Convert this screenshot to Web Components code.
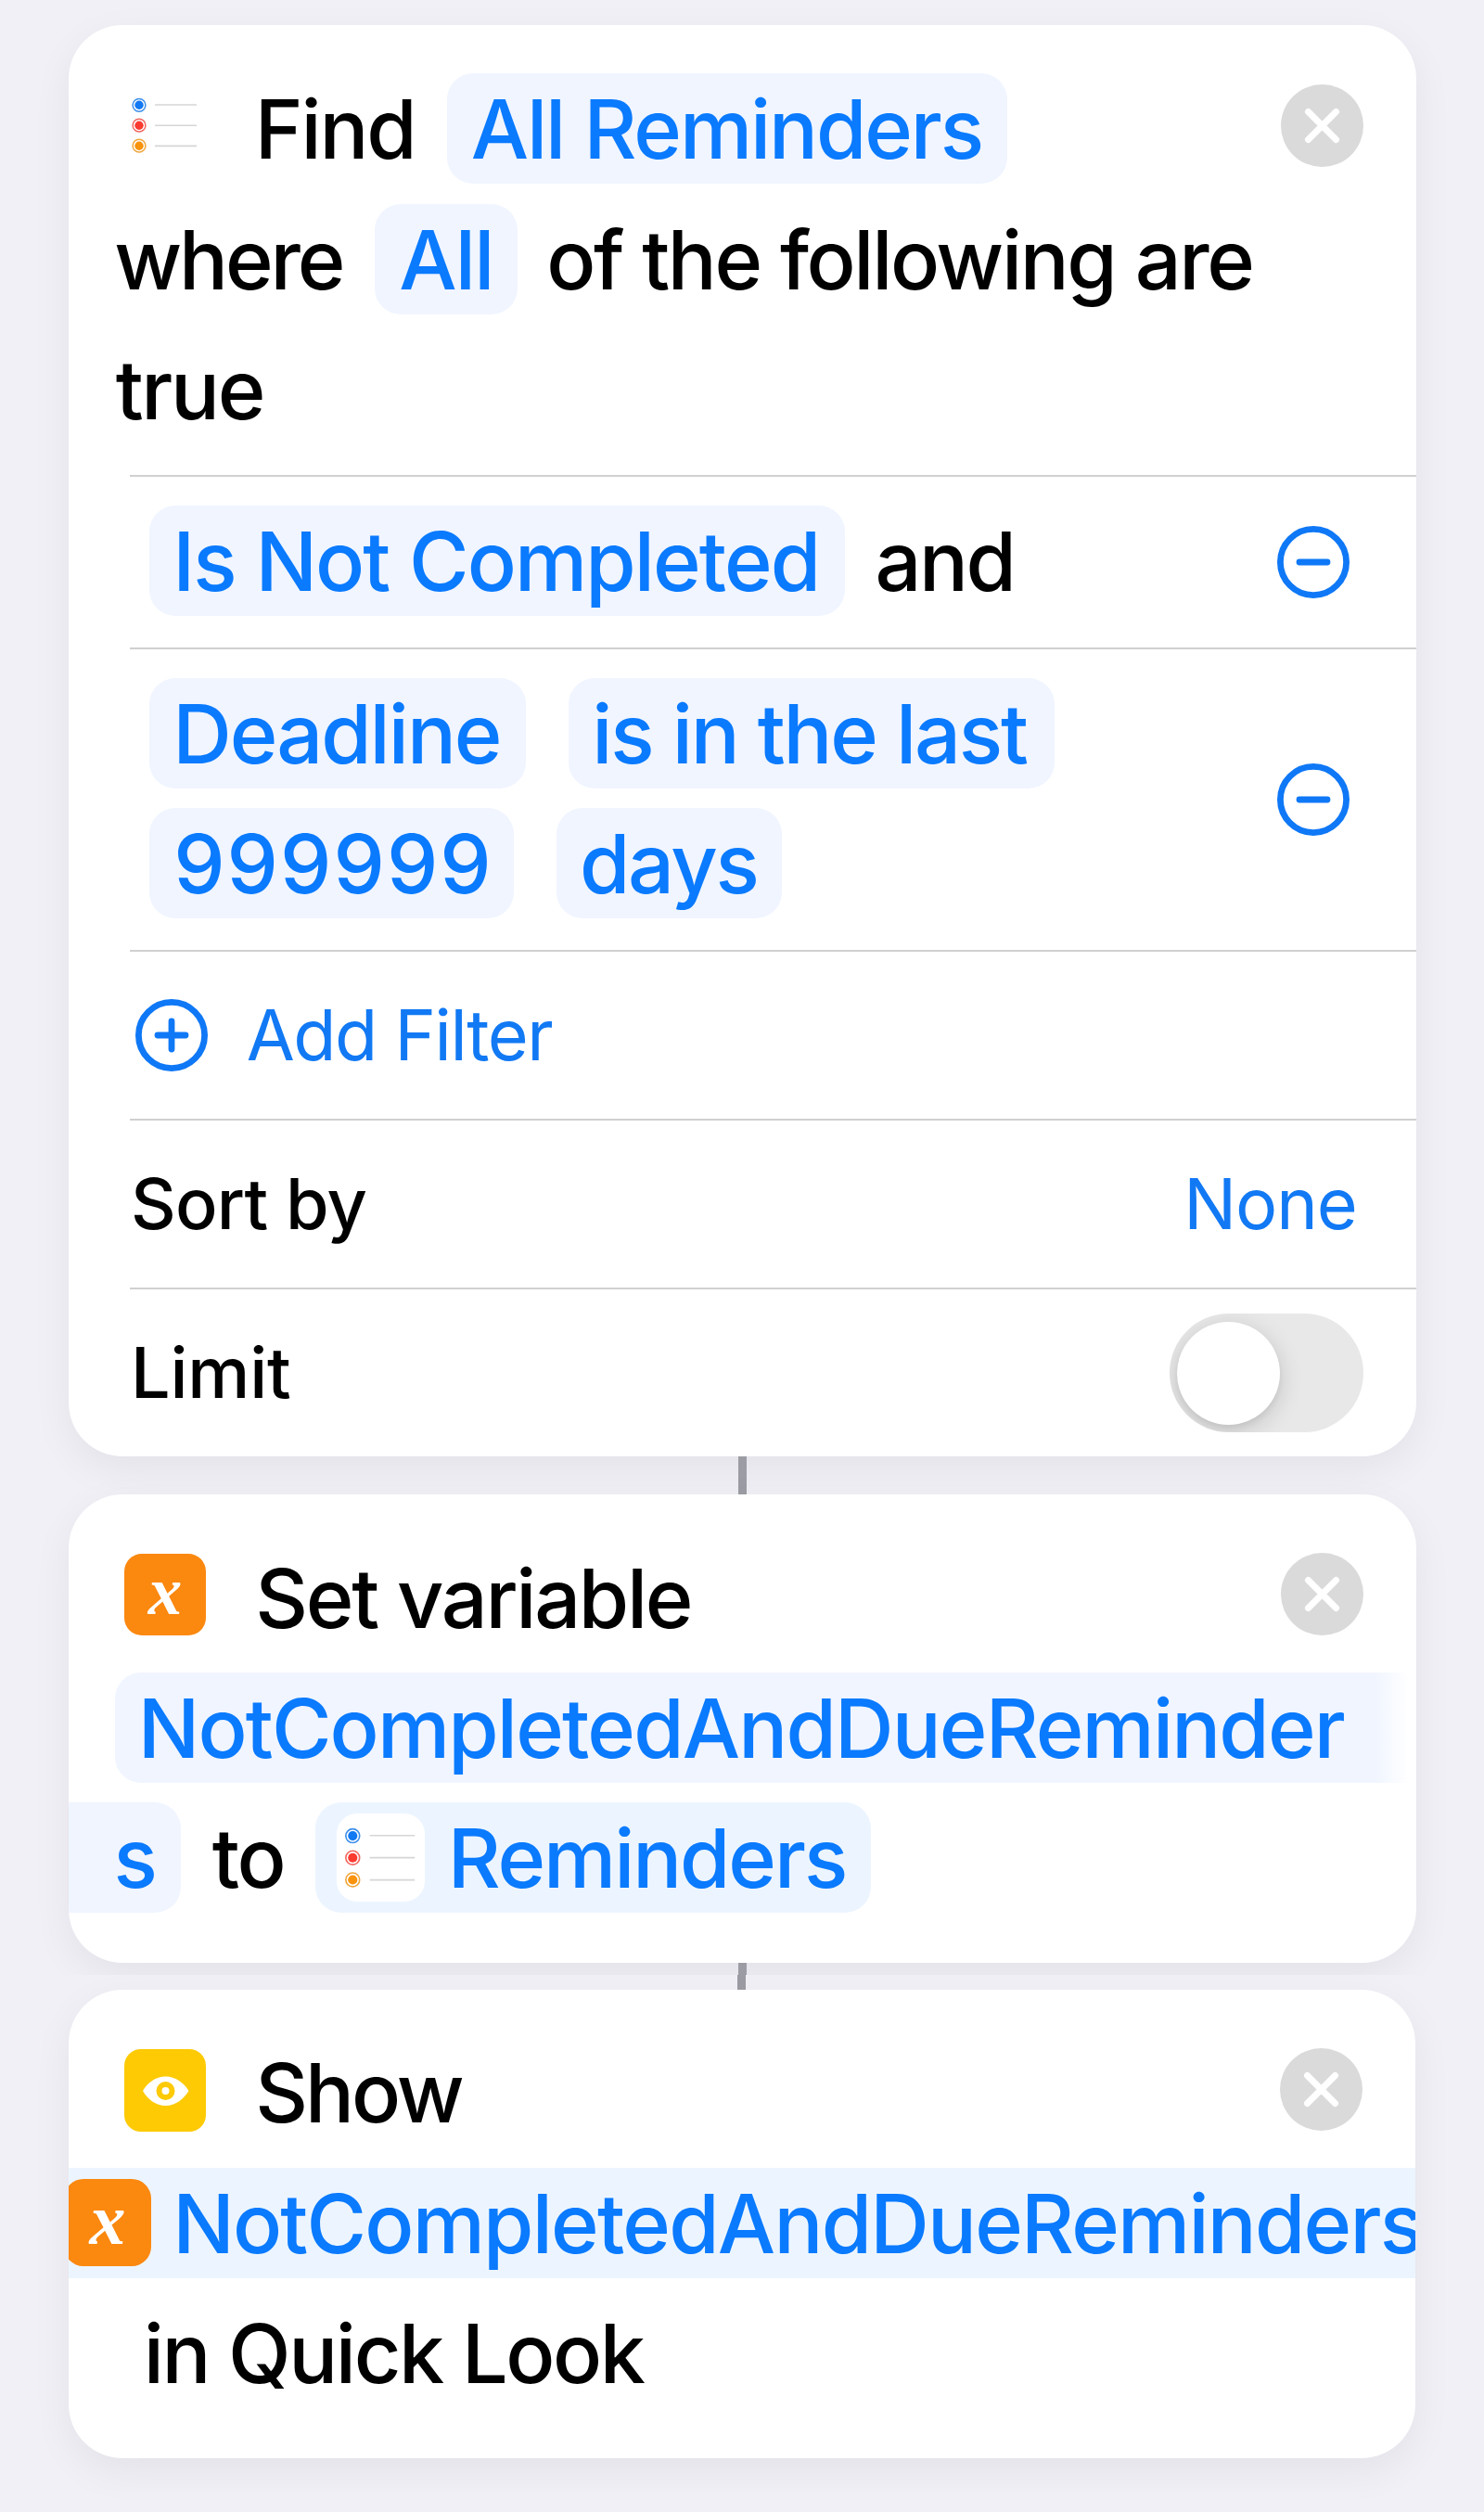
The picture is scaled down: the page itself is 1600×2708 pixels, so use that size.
<!DOCTYPE html>
<html lang="en">
<head>
<meta charset="utf-8">
<title>Shortcut editor</title>
<style>
html,body{margin:0;background:#f1f0f6;}
body{font-family:Inter,"Liberation Sans",sans-serif;width:1600px;height:2708px;overflow:hidden;color:#000}
</style>
</head>
<body>
<shortcut-editor></shortcut-editor>
<script>
const define=(name,html,init)=>{
  const t=document.createElement('template');t.innerHTML=html;
  customElements.define(name,class extends HTMLElement{
    connectedCallback(){
      if(this.shadowRoot)return;
      this.attachShadow({mode:'open'}).append(t.content.cloneNode(true));
      if(init)init.call(this,this.shadowRoot);
    }
  });
};
const ctx=document.createElement('canvas').getContext('2d');

/* A single line of text whose glyphs span exactly w pixels */
define('fit-text',`<style>
:host{display:block;flex:none;white-space:pre;font-size:88px;font-weight:530;line-height:120px;height:119px;font-kerning:normal}
:host([small]){font-size:75.5px;line-height:92px;height:92px;font-weight:500}
:host([regular]){font-weight:410}
</style><span></span>`,function(root){
  const text=this.getAttribute('text'),w=+this.getAttribute('w');
  const cs=getComputedStyle(this);
  ctx.font=cs.fontWeight+' '+cs.fontSize+' '+cs.fontFamily;
  const m=ctx.measureText(text);
  const ink=m.actualBoundingBoxRight+m.actualBoundingBoxLeft;
  const span=root.querySelector('span');
  span.textContent=text;
  this.style.width=w+'px';
  this.style.textIndent=(m.actualBoundingBoxLeft+.2)+'px';
  if(text.length>1)span.style.letterSpacing=((w+.6-ink)/(text.length-1)).toFixed(3)+'px';
});

define('token-pill',`<style>
:host{display:flex;flex:none;height:119px;border-radius:28px;background:#f0f5ff;color:#0a7aff}
:host([linked]){background:#ecf5ff}
</style><slot></slot>`);

define('close-button',`<style>:host{display:block;flex:none;width:89px;height:89px;margin-left:auto}svg{display:block}</style>
<svg width="89" height="89" viewBox="0 0 89 89"><circle cx="44.5" cy="44.5" r="44.5" fill="#dadada"/><path d="M29.5 29.5 59.5 59.5M59.5 29.5 29.5 59.5" stroke="#fff" stroke-width="7" stroke-linecap="round"/></svg>`);

define('round-button',`<style>:host{display:block;flex:none;width:78px;height:78px}svg{display:block}:host(:not([plus])) .v{display:none}</style>
<svg width="78" height="78" viewBox="0 0 78 78" fill="none" stroke="#0f78f6" stroke-width="6.8" stroke-linecap="round"><circle cx="39" cy="39" r="35.6"/><path d="M24 39H54"/><path class="v" d="M39 24V54"/></svg>`);

define('toggle-switch',`<style>
:host{display:flex;align-items:center;flex:none;box-sizing:border-box;width:209px;height:128px;border-radius:64px;background:#e8e8e8;padding-left:8px;overflow:hidden}
i{width:111px;height:111px;border-radius:50%;background:#fff;box-shadow:0 6px 26px rgba(0,0,0,.16),0 4px 6px rgba(0,0,0,.05)}
</style><i></i>`);

define('reminders-icon',`<style>:host{display:block;flex:none;width:88px;height:88px}svg{display:block;width:100%;height:100%}:host([tile]){width:95px;height:95px;background:#fff;border-radius:22px}</style>
<svg viewBox="0 0 88 88" fill="none">
<g stroke-width="1.5"><circle cx="16" cy="22.3" r="6.9" stroke="#3d8fea"/><circle cx="16" cy="44.2" r="6.9" stroke="#f2665f"/><circle cx="16" cy="66.2" r="6.9" stroke="#f0a63c"/></g>
<circle cx="16" cy="22.3" r="4.7" fill="#1279f2"/><circle cx="16" cy="44.2" r="4.7" fill="#fb3b30"/><circle cx="16" cy="66.2" r="4.7" fill="#f9930c"/>
<path d="M33 22H78M33 44.2H78M33 66.4H78" stroke="#d6d6d6" stroke-width="1.6"/></svg>`);

define('variable-icon',`<style>:host{display:flex;align-items:center;justify-content:center;flex:none;width:88px;height:88px;border-radius:19px;background:#fb880f;color:#fff;font:italic bold 73px/88px "Liberation Serif",serif}
span{display:block;height:88px;line-height:81px}
:host([large]){width:94px;height:94px;border-radius:21px;font-size:78px}</style><span>x</span>`);

define('eye-icon',`<style>:host{display:block;flex:none;width:88px;height:89px;border-radius:18px;background:#fdca04}svg{display:block}</style>
<svg width="88" height="89" viewBox="0 0 88 89"><path d="M20 45C25 36 34 29.500 44.500 29.500S64 36 69.500 45C64 54 55 61 44.500 61S25 54 20 45Z" fill="#fff"/><circle cx="44.500" cy="45" r="7" fill="none" stroke="#fdca04" stroke-width="6"/></svg>`);

define('action-card',`<style>:host{display:block;box-sizing:border-box;width:1453px;background:#fff;border-radius:58px;box-shadow:0 14px 44px rgba(20,10,40,.06)}
div{border-radius:inherit;overflow:hidden;height:100%}</style><div><slot></slot></div>`);

define('token-row',`<style>:host{display:flex;align-items:flex-start;height:119px;margin-bottom:21.500px}</style><slot></slot>`);

define('list-row',`<style>:host{display:flex;box-sizing:border-box;align-items:center;margin-left:66px;border-top:2px solid #d0d0d2;height:182px}
</style><slot></slot>`);

define('flow-link',`<style>:host{display:block;width:9px;background:#9c9ca4;margin-left:722px}</style>`);

define('shortcut-editor',`<style>
:host{display:block}
main{padding:27px 0 0 74px;box-sizing:border-box;overflow:hidden;height:2129px}
.tail{background:#f1f0f6;height:579px;padding-left:74px;overflow:hidden}
.head{height:485px;box-sizing:border-box;padding-top:52px}
.stack{display:flex;flex-direction:column}
.stack token-row:last-child{margin-bottom:0}
.fade{background:linear-gradient(90deg,#f0f5ff 0,#f0f5ff 1357.500px,#fff 1395px);border-radius:28px 0 0 28px;width:1404px}
</style>
<main>
<action-card style="height:1543px">
  <div class="head">
    <token-row><reminders-icon style="margin:12px 0 0 60px"></reminders-icon><fit-text text="Find" w="162" style="margin-left:59.500px"></fit-text><token-pill style="margin-left:38px;padding:0 28.500px 0 28px"><fit-text text="All Reminders" w="547.500"></fit-text></token-pill><close-button style="margin:11.500px 57px 0 auto"></close-button></token-row>
    <token-row><fit-text text="where" w="243" style="margin-left:51px"></fit-text><token-pill style="margin-left:36px;padding:0 31px 0 28px"><fit-text text="All" w="94.500"></fit-text></token-pill><fit-text text="of the following are" w="755.500" style="margin-left:35.500px"></fit-text></token-row>
    <token-row><fit-text text="true" w="157.500" style="margin-left:50.500px"></fit-text></token-row>
  </div>
  <list-row style="height:186px"><token-pill style="margin:-3px 0 0 20.500px;padding:0 31.700px 0 32.500px"><fit-text text="Is Not Completed" w="686"></fit-text></token-pill><fit-text text="and" w="143.500" style="margin:-3px 0 0 35.500px"></fit-text><round-button style="margin:0 72px 0 auto"></round-button></list-row>
  <list-row style="height:326px">
    <div class="stack" style="margin-top:-3px">
      <token-row><token-pill style="margin-left:20.500px;padding:0 29.600px 0 32.500px"><fit-text text="Deadline" w="344"></fit-text></token-pill><token-pill style="margin-left:46px;padding:0 29.700px 0 30.500px"><fit-text text="is in the last" w="464"></fit-text></token-pill></token-row>
      <token-row><token-pill style="margin-left:20.500px;padding:0 29.800px 0 30.500px"><fit-text text="999999" w="333.500"></fit-text></token-pill><token-pill style="margin-left:45.500px;padding:0 28.700px 0 29px"><fit-text text="days" w="186"></fit-text></token-pill></token-row>
    </div>
    <round-button style="margin:0 72px 0 auto"></round-button></list-row>
  <list-row style="color:#1279f4"><round-button plus style="margin-left:6px"></round-button><fit-text small regular text="Add Filter" w="328" style="margin-left:42.500px"></fit-text></list-row>
  <list-row><fit-text small text="Sort by" w="250" style="margin-left:3.700px"></fit-text><fit-text small regular text="None" w="178" style="color:#1279f4;margin:0 67px 0 auto"></fit-text></list-row>
  <list-row><fit-text small text="Limit" w="165.500" style="margin-left:6.700px"></fit-text><toggle-switch style="margin:0 57px 0 auto"></toggle-switch></list-row>
</action-card>
<flow-link style="height:41px"></flow-link>
<action-card style="height:505px;">
  <div style="padding-top:51.500px">
  <token-row><variable-icon style="margin:12.500px 0 0 60px"></variable-icon><fit-text text="Set variable" w="464" style="margin-left:57px"></fit-text><close-button style="margin:11.500px 57px 0 auto"></close-button></token-row>
  <token-row><token-pill class="fade" style="margin-left:49.500px;box-sizing:border-box;padding-left:32px"><fit-text text="NotCompletedAndDueReminder" w="1293.500"></fit-text></token-pill></token-row>
  <token-row style="margin-top:-1px"><token-pill style="border-radius:0 28px 28px 0;padding:0 28px 0 52.300px"><fit-text text="s" w="40.300"></fit-text></token-pill><fit-text text="to" w="76" style="margin-left:34px"></fit-text><token-pill linked style="margin-left:35px;padding:0 28.700px 0 23.500px"><reminders-icon tile style="margin-top:12px"></reminders-icon><fit-text text="Reminders" w="420.500" style="margin-left:31.500px"></fit-text></token-pill></token-row>
  </div>
</action-card>
<flow-link style="height:20px"></flow-link>
</main>
<div class="tail">
<flow-link style="height:16px;margin-left:721px"></flow-link>
<action-card style="height:505px;width:1452px">
  <div style="padding-top:51px">
  <token-row><eye-icon style="margin:12.500px 0 0 60px"></eye-icon><fit-text text="Show" w="219" style="margin-left:57px"></fit-text><close-button style="margin:12px 57px 0 auto"></close-button></token-row>
  <token-row><token-pill linked style="border-radius:0;width:1500px"><variable-icon large style="margin:12px 0 0 -5px"></variable-icon><fit-text text="NotCompletedAndDueReminders" w="1338" style="margin-left:30px"></fit-text></token-pill></token-row>
  <token-row><fit-text text="in Quick Look" w="535.500" style="margin-left:85.500px"></fit-text></token-row>
  </div>
</action-card>
</div>`);
</script>
</body>
</html>
